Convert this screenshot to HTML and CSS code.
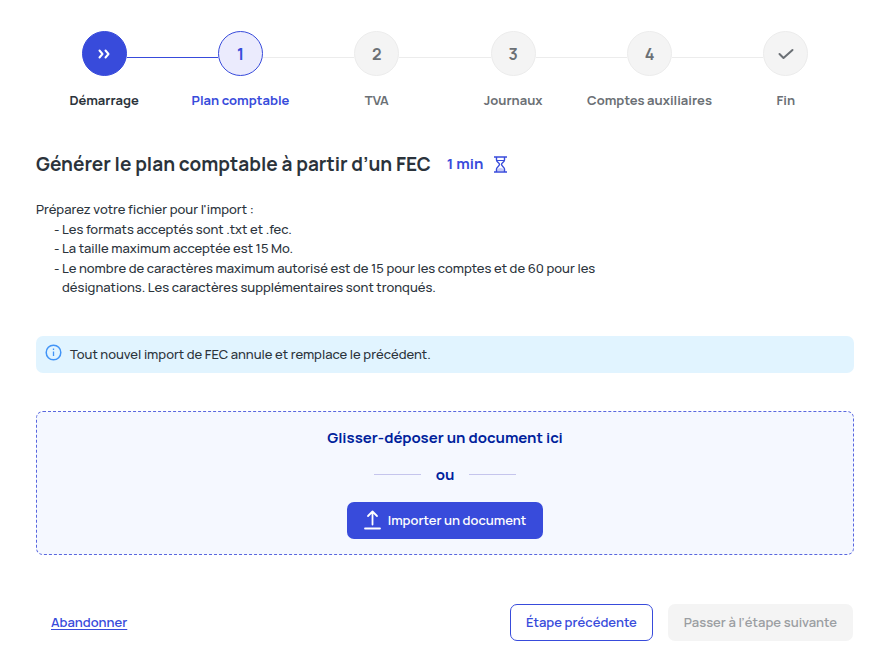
FILE: index.html
```html
<!DOCTYPE html>
<html lang="fr">
<head>
    <meta charset="UTF-8">
    <meta name="viewport" content="width=device-width, initial-scale=1.0">
    <title>Plan comptable - Import FEC</title>
    <link rel="stylesheet" href="styles.css">
</head>
<body>
    <main class="page">
        <ol class="stepper">
            <li class="step done">
                <div class="step-marker">
                    <span class="step-circle">
                        <svg width="14" height="12" viewBox="0 0 14 12" fill="none" stroke="currentColor" stroke-width="2" stroke-linecap="round" stroke-linejoin="round" aria-hidden="true"><path d="M2.500 2.500 5.500 6l-3 3.500M8.500 2.500l3 3.500-3 3.500"/></svg>
                    </span>
                </div>
                <span class="step-label">Démarrage</span>
            </li>
            <li class="step current" aria-current="step">
                <div class="step-marker"><span class="step-circle">1</span></div>
                <span class="step-label">Plan comptable</span>
            </li>
            <li class="step">
                <div class="step-marker"><span class="step-circle">2</span></div>
                <span class="step-label">TVA</span>
            </li>
            <li class="step">
                <div class="step-marker"><span class="step-circle">3</span></div>
                <span class="step-label">Journaux</span>
            </li>
            <li class="step">
                <div class="step-marker"><span class="step-circle">4</span></div>
                <span class="step-label">Comptes auxiliaires</span>
            </li>
            <li class="step">
                <div class="step-marker">
                    <span class="step-circle">
                        <svg width="16" height="12" viewBox="0 0 16 12" fill="none" stroke="currentColor" stroke-width="2" stroke-linecap="round" stroke-linejoin="round" aria-hidden="true"><path d="M1.500 6l4 4 9-8"/></svg>
                    </span>
                </div>
                <span class="step-label">Fin</span>
            </li>
        </ol>

        <div class="title-row">
            <h1>Générer le plan comptable à partir d’un FEC</h1>
            <span class="duration">
                1 min
                <svg width="13" height="17" viewBox="0 0 13 17" fill="none" stroke="currentColor" aria-hidden="true">
                    <path d="M3 15c0-2 1.500-3 3.500-3s3.500 1 3.500 3z" fill="#c3c8f6" stroke="none"/>
                    <path d="M0 1h13M0 16h13" stroke-width="1.600"/>
                    <path d="M2.500 1v3c0 2 3 3 3 4.500s-3 2.500-3 4.500v3M10.500 1v3c0 2-3 3-3 4.500s3 2.500 3 4.500v3" stroke-width="1.400"/>
                    <path d="M3 4.500h7"/>
                </svg>
            </span>
        </div>

        <div class="instructions">
            <p>Préparez votre fichier pour l'import :</p>
            <ul>
                <li>Les formats acceptés sont .txt et .fec.</li>
                <li>La taille maximum acceptée est 15 Mo.</li>
                <li>Le nombre de caractères maximum autorisé est de 15 pour les comptes et de 60 pour les désignations. Les caractères supplémentaires sont tronqués.</li>
            </ul>
        </div>

        <div class="notice">
            <svg width="17" height="17" viewBox="0 0 17 17" fill="none" stroke="currentColor" aria-hidden="true"><circle cx="8.500" cy="8.500" r="7.300" stroke-width="1.500"/><path d="M8.500 7.500V12M8.500 4.500V6" stroke-width="1.300"/></svg>
            <p>Tout nouvel import de FEC annule et remplace le précédent.</p>
        </div>

        <section class="dropzone">
            <h2>Glisser-déposer un document ici</h2>
            <div class="separator">ou</div>
            <button type="button" class="btn btn-primary">
                <svg width="17" height="20" viewBox="0 0 17 20" fill="none" stroke="currentColor" stroke-width="1.800" stroke-linecap="round" stroke-linejoin="round" aria-hidden="true"><path d="M8.500 14.500V2M4 6l4.500-4.500L13 6M1 18.500h15"/></svg>
                Importer un document
            </button>
        </section>

        <div class="actions">
            <a href="#" class="cancel">Abandonner</a>
            <button type="button" class="btn btn-outline">Étape précédente</button>
            <button type="button" class="btn btn-disabled" disabled>Passer à l’étape suivante</button>
        </div>
    </main>
</body>
</html>
```

FILE: styles.css
```css
* {
    box-sizing: border-box;
}
body {
    margin: 0;
    background-color: #fff;
    color: #2b333b;
    font-family: "Manrope", "Inter", sans-serif;
    font-size: 13px;
    font-weight: 500;
    line-height: 20px;
}
h1, h2, p, ul, ol {
    margin: 0;
    padding: 0;
}
ul, ol {
    list-style: none;
}
svg {
    flex-shrink: 0;
}
.page {
    padding: 31px 28px 25px 36px;
}

/* stepper */
.stepper {
    display: grid;
    grid-template-columns: repeat(6, 1fr);
}
.step {
    color: #6b7075;
    font-weight: 700;
    text-align: center;
}
.step-marker {
    display: flex;
    align-items: center;
    margin-bottom: 14px;
}
.step-marker::before,
.step-marker::after {
    content: "";
    flex: 1;
    height: 1px;
    margin-top: 8px;
    background-color: #ececec;
}
.step-circle {
    display: flex;
    align-items: center;
    justify-content: center;
    width: 45px;
    height: 45px;
    border: 1px solid #ececec;
    border-radius: 50%;
    background-color: #f4f4f4;
    font-size: 16px;
}
.step.done .step-circle {
    border-color: #384bdb;
    background-color: #384bdb;
    color: #fff;
}
.step.done .step-label {
    color: #2b333b;
}
.step.current {
    color: #384bdb;
}
.step.current .step-circle {
    border-color: #384bdb;
    background-color: #ebebfd;
}
.step.done .step-marker::after,
.step.current .step-marker::before {
    background-color: #384bdb;
}
.step:first-child .step-marker::before,
.step:last-child .step-marker::after {
    background-color: transparent;
}

/* title */
.title-row {
    display: flex;
    align-items: center;
    gap: 16px;
    margin-top: 40px;
}
h1 {
    font-size: 19px;
    font-weight: 700;
    line-height: 28px;
}
.duration {
    display: flex;
    align-items: center;
    gap: 11px;
    color: #384bdb;
    font-size: 15px;
    font-weight: 700;
}
.instructions {
    max-width: 580px;
    margin-top: 22px;
    line-height: 1.5;
}
.instructions ul {
    padding-left: 18px;
}
.instructions li {
    display: flex;
}
.instructions li::before {
    content: "-";
    flex: 0 0 8px;
}

.notice {
    display: flex;
    gap: 8px;
    margin-top: 38px;
    padding: 8px 9px 9px;
    border-radius: 7px;
    background-color: #e1f4ff;
}
.notice svg {
    color: #4194f7;
}

/* file drop area */
.dropzone {
    display: flex;
    flex-direction: column;
    align-items: center;
    margin-top: 38px;
    padding: 15px;
    border: 1px dashed #5967df;
    border-radius: 7px;
    background-color: #f5f8ff;
    color: #001f9c;
}
h2,
.separator {
    font-size: 15px;
    font-weight: 700;
    line-height: 22px;
}
.separator {
    display: flex;
    align-items: center;
    gap: 15px;
    margin: 15px 0 16px;
}
.separator::before,
.separator::after {
    content: "";
    width: 47px;
    height: 1px;
    background-color: #c5c5ed;
}

.btn {
    display: flex;
    align-items: center;
    gap: 7px;
    height: 37px;
    padding: 0 15px 1px;
    border: 1px solid transparent;
    border-radius: 7px;
    font-family: inherit;
    font-size: 13px;
    font-weight: 600;
    cursor: pointer;
}
.btn-primary {
    padding: 0 16px 1px;
    background-color: #384bdb;
    color: #fff;
}
.btn-outline {
    border-color: #384bdb;
    background-color: #fff;
    color: #384bdb;
}
.btn-disabled {
    background-color: #f4f4f4;
    color: #9b9ea2;
    cursor: default;
}
.actions {
    display: flex;
    align-items: center;
    gap: 15px;
    margin-top: 49px;
    padding: 0 1px 0 15px;
}
.cancel {
    margin-right: auto;
    padding-bottom: 1px;
    color: #384bdb;
    font-weight: 600;
    text-underline-offset: 2px;
}
```
